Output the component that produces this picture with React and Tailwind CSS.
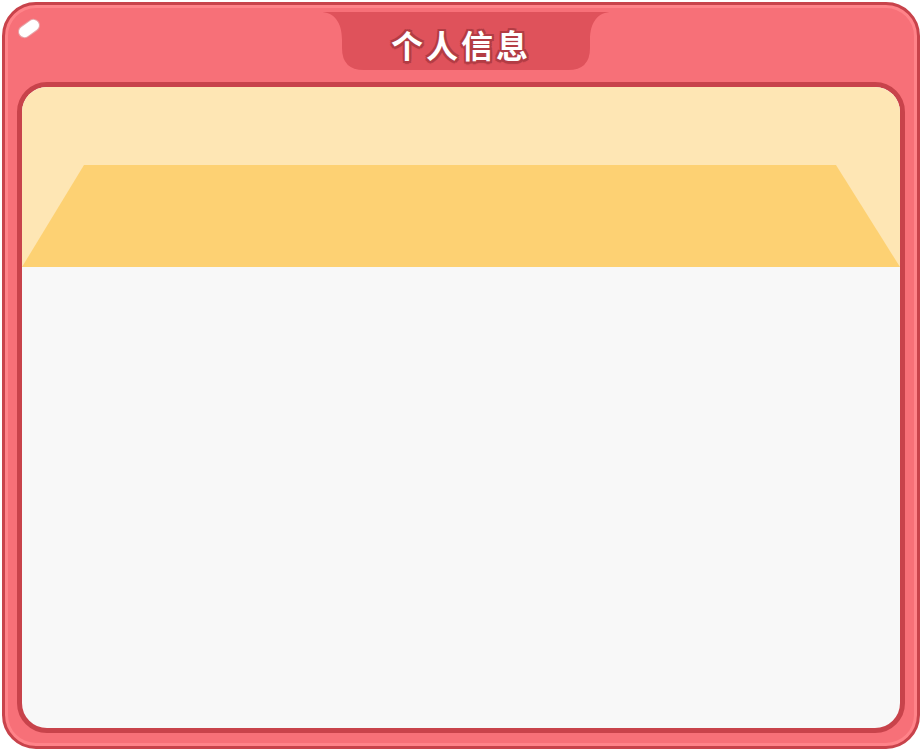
export default function App() {
  return (
    <div className="w-[922px] h-[751px] bg-white p-[2px]">
      <div className="relative flex h-full flex-col rounded-[34px] border-[3px] border-[#c8434b] bg-[#f77078] px-[12px] pt-[77px] pb-[13px] shadow-[inset_0_0_0_3px_#ff8389]">
        {/* glare */}
        <span className="absolute left-[13px] top-[18px] h-[11px] w-[22px] -rotate-[35deg] rounded-full bg-white shadow-[0_0_0_1px_#e6a4a8]" />

        {/* title tab */}
        <div className="absolute left-[315px] top-[7px] h-[58px] w-[292px]">
          <svg width="292" height="58" viewBox="0 0 292 58" className="absolute inset-0">
            <path
              d="M0 0 H292 C278 0 270 10 270 28 V36 Q270 58 248 58 H44 Q22 58 22 36 V28 C22 10 14 0 0 0 Z"
              fill="#df525b"
            />
          </svg>
          <div className="relative flex h-full items-center justify-center pt-[6px] pr-[10px]">
            <span className="text-[32px] font-bold leading-none tracking-[3px] text-white [font-family:'Noto_Sans_CJK_SC',sans-serif] [text-shadow:2px_0_0_#b33c44,-2px_0_0_#b33c44,0_2px_0_#b33c44,0_-2px_0_#b33c44,2px_2px_0_#b33c44,-2px_2px_0_#b33c44,2px_-2px_0_#b33c44,-2px_-2px_0_#b33c44,0_3px_1px_#b33c44]">
              个人信息
            </span>
          </div>
        </div>

        {/* inner panel */}
        <div className="flex flex-1 flex-col overflow-hidden rounded-[30px] border-[5px] border-[#c8434b] bg-[#f8f8f8]">
          <div className="flex h-[180px] flex-col justify-end bg-[#fee6b4]">
            <div className="h-[102px] bg-[#fdd173] [clip-path:polygon(62px_0,calc(100%-64px)_0,100%_100%,0_100%)]" />
          </div>
          <div className="flex-1" />
        </div>
      </div>
    </div>
  );
}
